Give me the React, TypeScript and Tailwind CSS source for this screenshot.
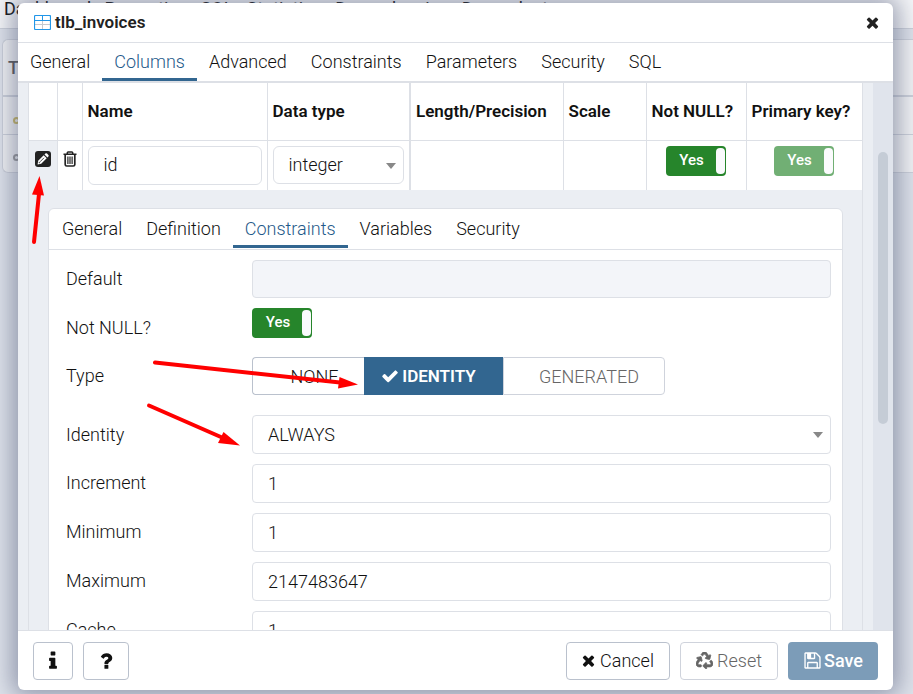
import React from "react";
import { FaRecycle } from "react-icons/fa";

const PATHS = {
  times:
    "M1490 1322q0 40-28 68l-136 136q-28 28-68 28t-68-28l-294-294-294 294q-28 28-68 28t-68-28l-136-136q-28-28-28-68t28-68l294-294-294-294q-28-28-28-68t28-68l136-136q28-28 68-28t68 28l294 294 294-294q28-28 68-28t68 28l136 136q28 28 28 68t-28 68l-294 294 294 294q28 28 28 68z",
  check:
    "M1671 566q0 40-28 68l-724 724-136 136q-28 28-68 28t-68-28l-136-136-362-362q-28-28-28-68t28-68l136-136q28-28 68-28t68 28l294 295 656-657q28-28 68-28t68 28l136 136q28 28 28 68z",
  save: "M512 1536h768v-384h-768v384zm896 0h128v-896q0-14-10-38.5t-20-34.5l-281-281q-10-10-34-20t-39-10v416q0 40-28 68t-68 28h-576q-40 0-68-28t-28-68v-416h-128v1280h128v-416q0-40 28-68t68-28h832q40 0 68 28t28 68v416zm-384-928v-320q0-13-9.5-22.5t-22.5-9.5h-192q-13 0-22.5 9.5t-9.5 22.5v320q0 13 9.5 22.5t22.5 9.5h192q13 0 22.5-9.5t9.5-22.5zm640 32v928q0 40-28 68t-68 28h-1344q-40 0-68-28t-28-68v-1344q0-40 28-68t68-28h928q40 0 88 20t76 48l280 280q28 28 48 76t20 88z",
  info: "M1216 1344v128q0 26-19 45t-45 19h-512q-26 0-45-19t-19-45v-128q0-26 19-45t45-19h64v-384h-64q-26 0-45-19t-19-45v-128q0-26 19-45t45-19h384q26 0 45 19t19 45v576h64q26 0 45 19t19 45zm-128-1152v192q0 26-19 45t-45 19h-256q-26 0-45-19t-19-45v-192q0-26 19-45t45-19h256q26 0 45 19t19 45z",
  question:
    "M1088 1256v240q0 16-12 28t-28 12h-240q-16 0-28-12t-12-28v-240q0-16 12-28t28-12h240q16 0 28 12t12 28zm316-600q0 54-15.5 101t-35 76.5-55 59.5-57.5 43.5-61 35.5q-41 23-68.5 65t-27.5 67q0 17-12 32.5t-28 15.5h-240q-15 0-25.5-18.5t-10.5-37.5v-45q0-83 65-156.5t143-108.5q59-27 84-56t25-76q0-42-46.5-74t-107.5-32q-65 0-108 29-35 25-107 115-13 16-31 16-12 0-25-8l-164-125q-13-10-15.5-25t5.5-28q160-266 464-266 80 0 161 31t146 83 106 127.5 41 158.5z",
};

function Icon({ name, className }: { name: keyof typeof PATHS; className: string }) {
  return (
    <svg viewBox="0 0 1792 1792" fill="currentColor" className={className} aria-hidden="true">
      <path d={PATHS[name]} />
    </svg>
  );
}

function PencilSquareIcon() {
  return (
    <svg viewBox="0 0 16 16" className="h-4 w-4" aria-hidden="true">
      <rect width="16" height="16" rx="3" fill="#222" />
      <path d="M2.600 13.400L3.200 9.800L8.700 4.300L11.700 7.300L6.200 12.800Z" fill="#fff" />
      <path d="M9.500 3.500L10.400 2.600Q11.200 1.900 12 2.600L13.400 4Q14.100 4.800 13.400 5.600L12.500 6.500Z" fill="#fff" />
      <path d="M5 10.800L9 6.800" stroke="#222" strokeWidth="0.800" />
      <path d="M3.900 10.700L5.300 12.100L4.200 12.300L3.700 11.800Z" fill="#222" />
    </svg>
  );
}

function TrashIcon() {
  return (
    <svg viewBox="0 0 14 16" fill="none" stroke="#222" className="h-4 w-[14px]" aria-hidden="true">
      <path d="M0.500 3.200H13.500" strokeWidth="1.600" />
      <path d="M4.300 3V1.700Q4.300 0.900 5.100 0.900H8.900Q9.700 0.900 9.700 1.700V3" strokeWidth="1.500" />
      <path d="M2.200 3.500V13.500Q2.200 15 3.700 15H10.300Q11.800 15 11.800 13.500V3.500" strokeWidth="1.700" />
      <path d="M4.900 5.500V13M7 5.500V13M9.100 5.500V13" strokeWidth="1.200" />
    </svg>
  );
}

function TableIcon() {
  return (
    <svg viewBox="0 0 17 15" className="h-[15px] w-[17px] shrink-0" aria-hidden="true">
      <rect x="0.5" y="0.5" width="16" height="14" rx="1" fill="#fff" />
      <path d="M1 9.500h15M8.500 6v8" stroke="#c4c9cf" />
      <path d="M1 5.500h15M8.500 1v4" stroke="#2196e8" />
      <rect x="0.500" y="0.500" width="16" height="14" rx="1" fill="none" stroke="#2196e8" strokeWidth="1.200" />
    </svg>
  );
}

function Toggle({ label, disabled = false }: { label: string; disabled?: boolean }) {
  return (
    <button
      type="button"
      role="switch"
      aria-checked="true"
      aria-label={label}
      disabled={disabled}
      className={
        "flex h-[30px] w-[60px] rounded bg-[#26852b] py-[2px] pr-px text-white " +
        (disabled ? "opacity-65" : "")
      }
    >
      <span className="flex-1 pl-[2px] text-center text-[15px] leading-[25px] font-medium">Yes</span>
      <span className="h-full w-[9px] rounded bg-[#f9fafc]" />
    </button>
  );
}

function Caret() {
  return (
    <span className="pointer-events-none absolute top-[17px] right-2 h-0 w-0 border-x-[5px] border-t-[6px] border-x-transparent border-t-[#888]" />
  );
}

function Tabs({ items, active, name }: { items: string[]; active: string; name: string }) {
  return (
    <div role="tablist" aria-label={name} className="flex">
      {items.map((t) => (
        <button
          key={t}
          type="button"
          role="tab"
          aria-selected={t === active}
          className={
            "h-[38px] border-b-3 px-3 pt-px text-lg leading-[27px] " +
            (t === active ? "border-[#326690] text-[#1f5a8a]" : "border-transparent")
          }
        >
          {t}
        </button>
      ))}
    </div>
  );
}

function TextRow({ id, label, value }: { id: string; label: string; value: string }) {
  return (
    <div className="flex h-[38px] items-center">
      <label htmlFor={id} className="w-[186px] shrink-0 pb-px">
        {label}
      </label>
      <input
        id={id}
        defaultValue={value}
        className="h-[39px] min-w-0 flex-1 rounded border border-[#dde0e6] bg-white px-[15px] outline-none"
      />
    </div>
  );
}

const HEADS = ["Name", "Data type", "Length/Precision", "Scale", "Not NULL?", "Primary key?"];

function ColumnsTable() {
  const cell = "border-l border-[#dde0e6] p-0";
  return (
    <table className="w-full table-fixed border-collapse bg-white">
      <colgroup>
        <col className="w-[28px]" />
        <col className="w-[25px]" />
        <col className="w-[185px]" />
        <col className="w-[143px]" />
        <col className="w-[153px]" />
        <col className="w-[83px]" />
        <col className="w-[100px]" />
        <col />
      </colgroup>
      <thead>
        <tr className="h-[57px] border-b border-[#dde0e6]">
          <td />
          <td className="border-l border-[#dde0e6]" />
          {HEADS.map((h) => (
            <th
              key={h}
              scope="col"
              className={
                "border-[#dde0e6] p-0 pl-[5px] text-left text-[17px] font-semibold whitespace-nowrap " +
                (h === "Length/Precision" ? "border-l-2" : "border-l")
              }
            >
              {h}
            </th>
          ))}
        </tr>
      </thead>
      <tbody>
        <tr className="h-[50px]">
          <td className="bg-[#ebeef3] p-0 pt-[10px] align-top">
            <button type="button" aria-label="Edit row" className="ml-[6px] block">
              <PencilSquareIcon />
            </button>
          </td>
          <td className={cell + " pt-[10px] align-top"}>
            <button type="button" aria-label="Delete row" className="ml-[5px] block">
              <TrashIcon />
            </button>
          </td>
          <td className={cell + " px-[5px]"}>
            <input
              aria-label="Name"
              defaultValue="id"
              className="block h-[39px] w-full rounded-md border border-[#dde0e6] px-[15px] pb-[2px] outline-none"
            />
          </td>
          <td className={cell + " px-[5px]"}>
            <div className="relative">
              <select
                aria-label="Data type"
                className="block h-[38px] w-full appearance-none rounded-md border border-[#dde0e6] bg-white px-[15px] pb-[2px] outline-none"
              >
                <option>integer</option>
              </select>
              <Caret />
            </div>
          </td>
          <td className="border-l-2 border-[#dde0e6]" />
          <td className={cell} />
          <td className={cell + " pt-[5px] pl-[19px] align-top"}>
            <Toggle label="Not NULL" />
          </td>
          <td className={cell + " pt-[5px] pl-[27px] align-top"}>
            <Toggle label="Primary key" disabled />
          </td>
        </tr>
      </tbody>
    </table>
  );
}

function ColumnEditor() {
  return (
    <section className="mx-[19px] mt-[18px] rounded-md border border-[#dde0e6] bg-white">
      <div className="border-b border-[#dde0e6] p-px">
        <Tabs
          name="Column properties"
          active="Constraints"
          items={["General", "Definition", "Constraints", "Variables", "Security"]}
        />
      </div>
      <form className="pt-[10px] pr-[11px] pb-4 pl-[17px]">
        <div className="flex flex-col gap-[10px]">
          <div className="flex h-[38px] items-center">
            <label htmlFor="default" className="w-[186px] shrink-0 pb-px">
              Default
            </label>
            <input
              id="default"
              disabled
              className="h-[38px] min-w-0 flex-1 rounded border border-[#dde0e6] bg-[#f3f5f9] px-4"
            />
          </div>
          <div className="flex h-[39px] items-start">
            <span className="w-[186px] shrink-0 leading-[39px]">Not NULL?</span>
            <Toggle label="Column is not null" />
          </div>
          <div className="flex h-[38px] items-center">
            <span className="w-[186px] shrink-0 pb-px">Type</span>
            <div className="flex" role="group" aria-label="Type">
              <button
                type="button"
                className="h-[38px] w-[112px] rounded-l border border-r-0 border-[#bac1cd] pl-3"
              >
                NONE
              </button>
              <button
                type="button"
                aria-pressed="true"
                className="flex h-[38px] w-[139px] items-center justify-center gap-[3px] bg-[#326690] pr-[20px] pl-[10px] text-[17px] font-semibold text-white"
              >
                <Icon name="check" className="h-[18px] w-[18px] shrink-0" />
                IDENTITY
              </button>
              <button
                type="button"
                disabled
                className="h-[38px] w-[162px] rounded-r border border-[#cfd3dc] pl-[10px] text-[#666]"
              >
                GENERATED
              </button>
            </div>
          </div>
        </div>
        <div className="mt-[20px] flex flex-col gap-[11px]">
          <div className="flex h-[38px] items-center">
            <label htmlFor="identity" className="w-[186px] shrink-0">
              Identity
            </label>
            <div className="relative flex-1">
              <select
                id="identity"
                className="block h-[39px] w-full appearance-none rounded border border-[#dde0e6] bg-white px-[15px] outline-none"
              >
                <option>ALWAYS</option>
              </select>
              <Caret />
            </div>
          </div>
          <TextRow id="increment" label="Increment" value="1" />
          <TextRow id="minimum" label="Minimum" value="1" />
          <TextRow id="maximum" label="Maximum" value="2147483647" />
          <TextRow id="cache" label="Cache" value="1" />
        </div>
      </form>
    </section>
  );
}

function BackgroundPage() {
  return (
    <div aria-hidden="true" className="h-full overflow-hidden bg-[#dfe3eb]">
      <div className="h-[29px] overflow-hidden border-b border-[#cdd1da] bg-[#f6f7f9] pl-1 text-lg leading-[17px] font-normal whitespace-nowrap">
        Dashboard&nbsp;&nbsp; Properties&nbsp;&nbsp; SQL&nbsp;&nbsp; Statistics&nbsp;&nbsp; Dependencies&nbsp;&nbsp; Dependents
      </div>
      <div className="mt-[10px] ml-[2px] rounded-l-md border border-r-0 border-[#cdd1da] bg-[#f2f3f5]">
        <div className="h-[57px] border-b-2 border-[#cdd1da] pl-[5px] text-lg leading-[56px] font-medium text-[#555]">
          Type
        </div>
        <div className="h-[38px] border-b border-[#cdd1da] pt-5 pl-[10px]">
          <div className="h-[7px] w-[7px] rounded-full border-2 border-[#c9b860]" />
        </div>
        <div className="h-[37px] pt-[19px] pl-[10px]">
          <div className="h-[7px] w-[7px] rounded-full border-2 border-[#999]" />
        </div>
      </div>
    </div>
  );
}

const ARROWS = [
  { line: "M34 242L39 194", head: "39.500,176 44,195.500 32,194.500" },
  { line: "M155 362.500L340 382.500", head: "358,384.500 338,388.500 339.500,377" },
  { line: "M149 405.500L222 437.500", head: "240,445.500 218,443 223.500,432" },
];

export default function App() {
  return (
    <div className="relative h-screen overflow-hidden font-['Roboto',sans-serif] text-lg leading-[27px] font-light text-[#111]">
      <BackgroundPage />
      <div className="absolute inset-0 flex pt-[3px] pr-[20px] pb-[4px] pl-[18px]">
        <main
          role="dialog"
          aria-label="tlb_invoices"
          className="flex min-w-0 flex-1 flex-col overflow-hidden rounded-md bg-white shadow-[0_0_24px_6px_rgba(80,90,120,0.55)]"
        >
          <header className="flex h-10 shrink-0 items-center gap-1 border-b border-[#dde0e6] pr-3 pl-4 text-[#222]">
            <TableIcon />
            <h1 className="flex-1 text-[17px] leading-[27px] font-semibold">tlb_invoices</h1>
            <button type="button" aria-label="Close">
              <Icon name="times" className="h-[17px] w-[17px]" />
            </button>
          </header>
          <div className="h-10 shrink-0 border-b-2 border-[#dde0e6]">
            <Tabs
              name="Table properties"
              active="Columns"
              items={["General", "Columns", "Advanced", "Constraints", "Parameters", "Security", "SQL"]}
            />
          </div>
          <div className="flex min-h-0 flex-1 overflow-hidden bg-[#ebeef3]">
            <div className="ml-[10px] h-full min-w-0 flex-1 overflow-hidden border-x border-[#dde0e6]">
              <ColumnsTable />
              <ColumnEditor />
            </div>
            <div className="ml-[10px] w-5 shrink-0 bg-[#e0e4ec] px-[5px] pt-[69px]">
              <div className="h-[272px] rounded-full bg-[#c5ccd6]" />
            </div>
          </div>
          <footer className="flex h-[60px] shrink-0 items-center gap-[10px] border-t border-[#dde0e6] px-[15px]">
            <button
              type="button"
              aria-label="Information"
              className="flex h-[38px] w-10 items-center justify-center rounded border border-[#bac1cd]"
            >
              <Icon name="info" className="h-[22px] w-[22px]" />
            </button>
            <button
              type="button"
              aria-label="Help"
              className="flex h-[38px] w-[46px] items-center justify-center rounded border border-[#bac1cd]"
            >
              <Icon name="question" className="h-[22px] w-[22px]" />
            </button>
            <span className="flex-1" />
            <button
              type="button"
              className="flex h-[38px] w-[104px] items-center justify-center gap-[3px] rounded border border-[#bac1cd] pr-[2px]"
            >
              <Icon name="times" className="h-[17px] w-[17px]" />
              Cancel
            </button>
            <button
              type="button"
              disabled
              className="flex h-[38px] w-[98px] items-center justify-center gap-1 rounded border border-[#cfd3dc] text-[#666]"
            >
              <FaRecycle className="h-[17px] w-[17px] stroke-current stroke-[24]" />
              Reset
            </button>
            <button
              type="button"
              disabled
              className="flex h-[38px] w-[90px] items-center justify-center gap-[2px] rounded bg-[#7c9cb8] font-medium text-white"
            >
              <Icon name="save" className="h-[19px] w-[19px]" />
              Save
            </button>
          </footer>
        </main>
      </div>
      <svg
        viewBox="0 0 913 694"
        className="pointer-events-none absolute top-0 left-0 h-[694px] w-[913px]"
        aria-hidden="true"
      >
        {ARROWS.map((a) => (
          <g key={a.line}>
            <path d={a.line} stroke="#f00" strokeWidth="4" strokeLinecap="round" />
            <polygon points={a.head} fill="#f00" />
          </g>
        ))}
      </svg>
    </div>
  );
}
